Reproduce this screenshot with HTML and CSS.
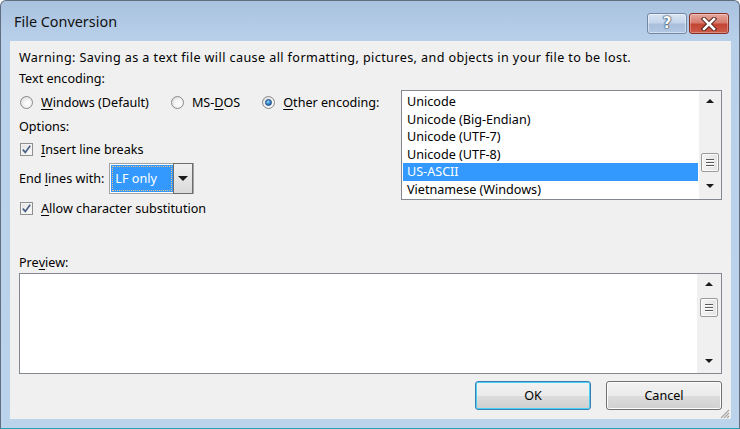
FILE: index.html
```html
<!DOCTYPE html>
<html>
<head>
<meta charset="utf-8">
<title>File Conversion</title>
<link rel="stylesheet" href="styles.css">
</head>
<body>
<div class="window">
  <div class="titlebar">
    <span class="title">File Conversion</span>
    <div class="caption-btns">
      <div class="cbtn help"><span class="qmark">?</span></div>
      <div class="cbtn close">
        <svg width="18" height="14" viewBox="0 0 18 14"><path d="M4 2 L14 12 M14 2 L4 12" stroke="#4a1a14" stroke-width="4.4" stroke-linecap="square"/><path d="M4 2 L14 12 M14 2 L4 12" stroke="#ffffff" stroke-width="2.6" stroke-linecap="square"/></svg>
      </div>
    </div>
  </div>
  <div class="client">
    <div class="row warn">Warning: Saving as a text file will cause all formatting, pictures, and objects in your file to be lost.</div>
    <div class="top">
      <div class="left">
        <div class="row r-enc">Text encoding:</div>
        <div class="row radios">
          <div class="opt"><span class="rb"></span><span><u>W</u>indows (Default)</span></div>
          <div class="opt"><span class="rb"></span><span>MS-<u>D</u>OS</span></div>
          <div class="opt"><span class="rb on"><span class="dot"></span></span><span><u>O</u>ther encoding:</span></div>
        </div>
        <div class="row r-opt">Options:</div>
        <div class="row r-ins">
          <span class="cb"><svg width="11" height="11" viewBox="0 0 11 11"><path d="M1.8 5.6 L4.3 8.4 L9.2 1.8" fill="none" stroke="#4a5f85" stroke-width="1.7"/></svg></span>
          <span><u>I</u>nsert line breaks</span>
        </div>
        <div class="row r-end">
          <span>End <u>l</u>ines with:</span>
          <div class="combo">
            <span class="sel"><span class="focus">LF only</span></span>
            <span class="drop"><span class="tri-down"></span></span>
          </div>
        </div>
        <div class="row r-allow">
          <span class="cb"><svg width="11" height="11" viewBox="0 0 11 11"><path d="M1.8 5.6 L4.3 8.4 L9.2 1.8" fill="none" stroke="#4a5f85" stroke-width="1.7"/></svg></span>
          <span><u>A</u>llow character substitution</span>
        </div>
      </div>
      <div class="listbox">
        <div class="items">
          <div class="item">Unicode</div>
          <div class="item">Unicode (Big-Endian)</div>
          <div class="item">Unicode (UTF-7)</div>
          <div class="item">Unicode (UTF-8)</div>
          <div class="item selected">US-ASCII</div>
          <div class="item">Vietnamese (Windows)</div>
        </div>
        <div class="vscroll list-scroll">
          <div class="arrow"><span class="tri-up"></span></div>
          <div class="track"><div class="thumb"><span></span><span></span><span></span></div></div>
          <div class="arrow"><span class="tri-down"></span></div>
        </div>
      </div>
    </div>
    <div class="row r-prev">Pre<u>v</u>iew:</div>
    <div class="preview">
      <div class="preview-body"></div>
      <div class="vscroll prev-scroll">
        <div class="arrow"><span class="tri-up"></span></div>
        <div class="track"><div class="thumb"><span></span><span></span><span></span></div></div>
        <div class="arrow"><span class="tri-down"></span></div>
      </div>
    </div>
    <div class="buttons">
      <button class="btn default">OK</button>
      <button class="btn">Cancel</button>
    </div>
    <svg class="grip" width="11" height="11" viewBox="0 0 11 11">
      <path d="M10 2 L2 10 M10 5 L5 10 M10 8 L8 10" stroke="#a9a9a9" stroke-width="1.2"/>
    </svg>
  </div>
</div>
</body>
</html>
```

FILE: styles.css
```css
* { box-sizing: border-box; }
html, body { margin: 0; padding: 0; }
body {
  width: 740px;
  height: 429px;
  overflow: hidden;
  background: #ffffff;
  font-family: "Segoe UI", "Noto Sans", sans-serif;
  font-size: 12.6px;
  color: #000;
}
u { text-decoration: underline; text-underline-offset: 2px; }

.window {
  width: 740px;
  height: 429px;
  display: flex;
  flex-direction: column;
  border: 1px solid #5f6f80;
  border-bottom-color: #2aa0b8;
  border-radius: 6px 6px 0 0;
  background: linear-gradient(#a9c2df 0px, #b9d0ea 40px, #bcd3ec 100%);
  padding: 0 8px 9px 9px;
}

.titlebar {
  height: 40px;
  flex: none;
  display: flex;
  align-items: flex-start;
  justify-content: space-between;
}
.title {
  margin-top: 11px;
  margin-left: 4px;
  font-size: 14.4px;
  line-height: 20px;
  color: #111;
}
.caption-btns {
  display: flex;
  gap: 2px;
  margin-top: 12px;
  margin-right: 2px;
}
.cbtn {
  width: 40px;
  height: 21px;
  border-radius: 3px;
  display: flex;
  align-items: center;
  justify-content: center;
}
.help {
  border: 1px solid #7388a6;
  background: linear-gradient(#d8e4f2 0%, #c3d4ea 48%, #a8bedb 52%, #b3c7e1 100%);
  box-shadow: inset 0 0 0 1px rgba(255,255,255,0.45);
}
.qmark {
  font-family: "DejaVu Sans", sans-serif;
  font-weight: bold;
  font-size: 15px;
  line-height: 15px;
  color: #fff;
  text-shadow: 0 0 1px #2d3e5a, 0 0 1px #2d3e5a, 0 0 2px #2d3e5a;
}
.close {
  width: 40px;
  border: 1px solid #8a3027;
  background: linear-gradient(#e6a89d 0%, #d57a6c 48%, #c34433 52%, #cc5a48 100%);
  box-shadow: inset 0 0 0 1px rgba(255,255,255,0.3);
}

.client {
  flex: 1;
  position: relative;
  background: #f0f0f0;
  padding: 6px 9px 0 9px;
  display: flex;
  flex-direction: column;
}

.row {
  display: flex;
  align-items: center;
  white-space: nowrap;
}
.warn { height: 20px; letter-spacing: 0.4px; }
.top { display: flex; }
.left { width: 382px; flex: none; display: flex; flex-direction: column; }
.r-enc { height: 22px; }
.radios { height: 26px; }
.r-opt { height: 22px; }
.r-ins { height: 24px; }
.r-end { height: 34px; }
.r-allow { height: 26px; }

.opt { display: flex; align-items: center; margin-right: 21px; }
.rb {
  width: 13px;
  height: 13px;
  margin: 0 8px 0 1px;
  border: 1px solid #8a8a8a;
  border-radius: 50%;
  background: radial-gradient(circle at 60% 60%, #ffffff 0%, #f4f4f4 40%, #d2d2d2 100%);
  display: flex;
  align-items: center;
  justify-content: center;
}
.rb .dot {
  width: 7px;
  height: 7px;
  border-radius: 50%;
  background: radial-gradient(circle at 40% 35%, #9ad7f7 0%, #3a8fd3 45%, #1b4f8f 100%);
  border: 1px solid #1a4680;
}

.cb {
  width: 13px;
  height: 13px;
  margin: 0 8px 0 1px;
  border: 1px solid #8e8f8f;
  background: linear-gradient(135deg, #e0e0e0, #ffffff);
  box-shadow: inset 0 0 0 1px #f4f4f4;
  display: flex;
  align-items: center;
  justify-content: center;
}

.combo {
  margin-left: 5px;
  width: 85px;
  height: 31px;
  border: 1px solid #a4a4a4;
  background: #fff;
  display: flex;
  padding: 1px 0 1px 1px;
}
.sel {
  width: 62px;
  background: #3399ff;
  color: #fff;
  padding: 1px;
  display: flex;
}
.focus {
  flex: 1;
  border: 1px dotted #f0c080;
  padding-left: 2px;
  display: flex;
  align-items: center;
}
.drop {
  flex: 1;
  margin: -2px 0 -2px 0;
  border: 1px solid #6e6e6e;
  background: linear-gradient(#f0f0f0, #dadada);
  display: flex;
  align-items: center;
  justify-content: center;
}

.tri-down, .tri-up {
  width: 0;
  height: 0;
  border-left: 4px solid transparent;
  border-right: 4px solid transparent;
}
.tri-down { border-top: 4px solid #1a1a1a; }
.tri-up { border-bottom: 4px solid #1a1a1a; }
.drop .tri-down {
  border-left-width: 5px;
  border-right-width: 5px;
  border-top-width: 5px;
}

.listbox {
  width: 321px;
  height: 110px;
  margin-top: 23px;
  border: 1px solid #828790;
  background: #fff;
  display: flex;
}
.items {
  flex: 1;
  padding: 2px 1px 0 1px;
}
.item {
  height: 17.5px;
  line-height: 17.5px;
  padding-left: 4px;
}
.item.selected { background: #3399ff; color: #fff; }

.vscroll {
  width: 22px;
  flex: none;
  background: #f0f0f0;
  display: flex;
  flex-direction: column;
  align-items: center;
}
.vscroll .arrow {
  height: 20px;
  width: 100%;
  display: flex;
  align-items: center;
  justify-content: center;
}
.vscroll .track { flex: 1; width: 100%; display: flex; flex-direction: column; align-items: center; }
.thumb {
  width: 18px;
  height: 19px;
  border: 1px solid #9a9a9a;
  border-radius: 2px;
  background: linear-gradient(90deg, #f4f4f4, #e4e4e4);
  box-shadow: inset 0 0 0 1px #fbfbfb;
  display: flex;
  flex-direction: column;
  align-items: center;
  justify-content: center;
  gap: 2px;
}
.thumb span {
  width: 8px;
  height: 1px;
  background: #5a5a5a;
  box-shadow: 0 1px 0 #ffffff;
}
.list-scroll { padding-bottom: 3px; }
.list-scroll .track { padding-top: 42px; }

.r-prev { height: 18px; margin-top: 32px; }
.preview {
  margin-top: 2px;
  height: 101px;
  border: 1px solid #828790;
  background: #fff;
  display: flex;
}
.preview-body { flex: 1; }
.prev-scroll { width: 24px; }
.prev-scroll .track { padding-top: 4px; }
.prev-scroll .arrow:last-child { height: 24px; }

.buttons {
  margin-top: 7px;
  display: flex;
  justify-content: flex-end;
  gap: 15px;
}
.btn {
  width: 116px;
  height: 29px;
  font-family: inherit;
  font-size: 12.6px;
  color: #000;
  border: 1px solid #707070;
  border-radius: 3px;
  background: linear-gradient(#f2f2f2 0%, #ebebeb 50%, #dddddd 51%, #cfcfcf 100%);
  box-shadow: inset 0 0 0 1px #fcfcfc;
  padding: 0;
}
.btn.default {
  border-color: #3c7fb1;
  box-shadow: inset 0 0 0 1px #48d0f8;
}

.grip {
  position: absolute;
  right: 1px;
  bottom: 0;
}
```
